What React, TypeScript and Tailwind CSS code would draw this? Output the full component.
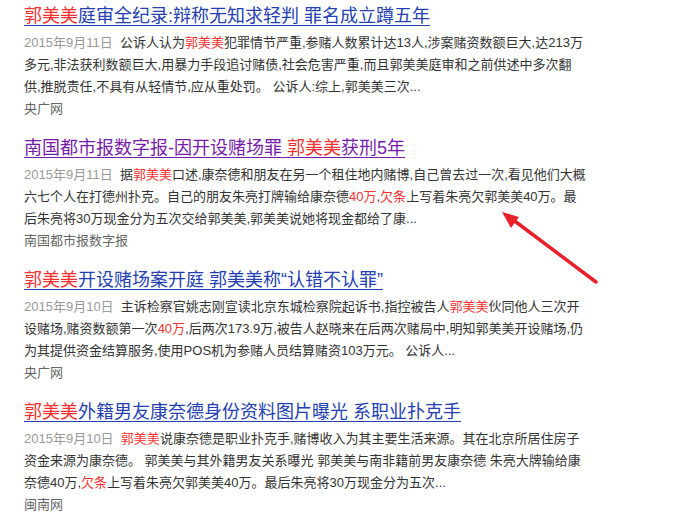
import React from "react";

const R = ({ children }: { children: React.ReactNode }) => (
  <span className="text-[#f73131]">{children}</span>
);
const D = ({ children }: { children: React.ReactNode }) => (
  <span className="text-[#999999]">{children}</span>
);

type Item = {
  title: React.ReactNode;
  visited?: boolean;
  lines: React.ReactNode[];
  source: string;
};

const items: Item[] = [
  {
    title: (
      <>
        <R>郭美美</R>庭审全纪录:辩称无知求轻判 罪名成立蹲五年
      </>
    ),
    lines: [
      <>
        <D>2015年9月11日</D>&nbsp; 公诉人认为<R>郭美美</R>犯罪情节严重,参赌人数累计达13人,涉案赌资数额巨大,达213万
      </>,
      <>多元,非法获利数额巨大,用暴力手段追讨赌债,社会危害严重,而且郭美美庭审和之前供述中多次翻</>,
      <>供,推脱责任,不具有从轻情节,应从重处罚。 公诉人:综上,郭美美三次...</>,
    ],
    source: "央广网",
  },
  {
    title: (
      <>
        南国都市报数字报-因开设赌场罪 <R>郭美美</R>获刑5年
      </>
    ),
    visited: true,
    lines: [
      <>
        <D>2015年9月11日</D>&nbsp; 据<R>郭美美</R>口述,康奈德和朋友在另一个租住地内赌博,自己曾去过一次,看见他们大概
      </>,
      <>
        六七个人在打德州扑克。自己的朋友朱亮打牌输给康奈德<R>40万</R>,<R>欠条</R>上写着朱亮欠郭美美40万。最
      </>,
      <>后朱亮将30万现金分为五次交给郭美美,郭美美说她将现金都给了康...</>,
    ],
    source: "南国都市报数字报",
  },
  {
    title: (
      <>
        <R>郭美美</R>开设赌场案开庭 郭美美称“认错不认罪”
      </>
    ),
    lines: [
      <>
        <D>2015年9月10日</D>&nbsp; 主诉检察官姚志刚宣读北京东城检察院起诉书,指控被告人<R>郭美美</R>伙同他人三次开
      </>,
      <>
        设赌场,赌资数额第一次<R>40万</R>,后两次173.9万,被告人赵晓来在后两次赌局中,明知郭美美开设赌场,仍
      </>,
      <>为其提供资金结算服务,使用POS机为参赌人员结算赌资103万元。 公诉人...</>,
    ],
    source: "央广网",
  },
  {
    title: (
      <>
        <R>郭美美</R>外籍男友康奈德身份资料图片曝光 系职业扑克手
      </>
    ),
    lines: [
      <>
        <D>2015年9月10日</D>&nbsp; <R>郭美美</R>说康奈德是职业扑克手,赌博收入为其主要生活来源。其在北京所居住房子
      </>,
      <>资金来源为康奈德。 郭美美与其外籍男友关系曝光 郭美美与南非籍前男友康奈德 朱亮大牌输给康</>,
      <>
        奈德40万,<R>欠条</R>上写着朱亮欠郭美美40万。最后朱亮将30万现金分为五次...
      </>,
    ],
    source: "闽南网",
  },
];

export default function App() {
  return (
    <div
      className="relative w-[676px] h-[520px] overflow-hidden bg-white pl-[24px] pt-[4px]"
      style={{ fontFamily: '"Liberation Sans", Arial, "Noto Sans CJK SC", sans-serif' }}
    >
      <div className="flex flex-col gap-[16px]">
        {items.map((it, i) => (
          <div key={i} className="flex flex-col">
            <div
              className={`text-[18px] leading-[24px] underline underline-offset-[3px] whitespace-nowrap ${
                it.visited ? "text-[#771caa]" : "text-[#2440b3]"
              }`}
            >
              {it.title}
            </div>
            <div className="mt-[4px] text-[13px] leading-[22px] text-[#333333]">
              {it.lines.map((l, j) => (
                <div key={j} className="whitespace-nowrap">
                  {l}
                </div>
              ))}
            </div>
            <div className="text-[13px] leading-[22px] text-[#666666]">{it.source}</div>
          </div>
        ))}
      </div>
      <svg
        className="absolute left-0 top-0 pointer-events-none"
        width="676"
        height="520"
        viewBox="0 0 676 520"
      >
        <line
          x1="596"
          y1="282"
          x2="512"
          y2="219"
          stroke="#e8202a"
          strokeWidth="3.5"
          strokeLinecap="round"
        />
        <polygon points="502,212 519,217 511,228" fill="#e8202a" />
      </svg>
    </div>
  );
}
